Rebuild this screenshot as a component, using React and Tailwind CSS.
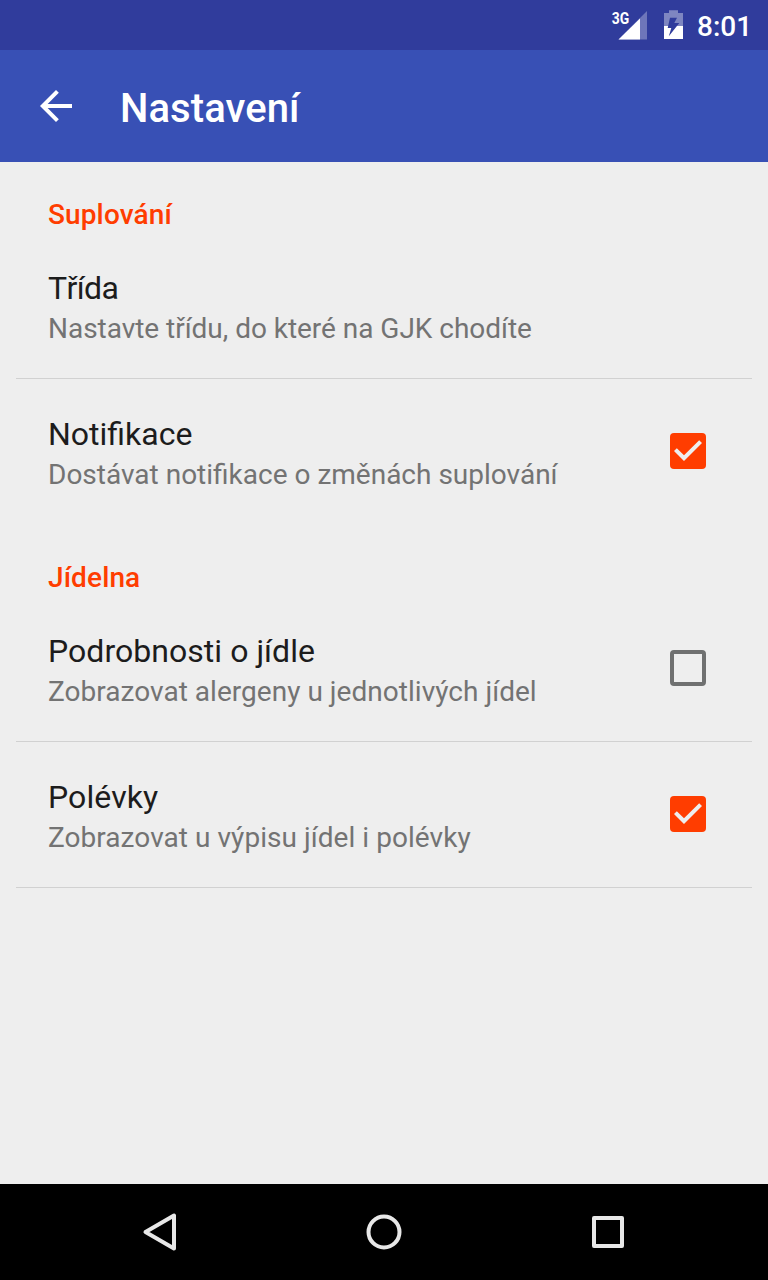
function CheckBox({ checked }) {
  return (
    <svg className="size-12 shrink-0" viewBox="0 0 48 48">
      {checked ? (
        <>
          <rect x="6" y="6" width="36" height="36" rx="4" fill="#ff3d00" />
          <path d="M20 34 10 24l2.830-2.830L20 28.340l15.170-15.170L38 16z" fill="#eeeeee" />
        </>
      ) : (
        <rect x="8" y="8" width="32" height="32" rx="2" fill="none" stroke="#6f7070" strokeWidth="4" />
      )}
    </svg>
  );
}

function Category({ children }) {
  return (
    <h2 className="flex h-[71px] items-start px-12 pt-[33px] text-[28px] leading-[40px] font-medium tracking-[0.12px] text-[#ff3d00]">
      {children}
    </h2>
  );
}

function Preference({ title, titleClass = "", summary, summaryClass = "", checked, divider }) {
  return (
    <div className="mx-4 flex h-[146px] flex-col">
      <div className="flex flex-1 items-start justify-between pr-10 pl-8">
        <div className="pt-[35px] whitespace-nowrap">
          <div className={`text-[32px] leading-[40px] text-[#1c1c1c] ${titleClass}`}>{title}</div>
          <div className={`text-[28px] leading-[42px] text-[#737373] ${summaryClass}`}>{summary}</div>
        </div>
        {checked !== undefined && (
          <div className="pt-12">
            <CheckBox checked={checked} />
          </div>
        )}
      </div>
      {divider && <div className="h-px bg-[#d1d1d1]" />}
    </div>
  );
}

function StatusBar() {
  return (
    <div className="flex h-[50px] justify-end bg-[#303c9c] text-white">
      <svg className="h-[50px] w-[90px]" viewBox="0 0 90 50">
        <path d="M47 11V39.5H18.5Z" fill="#fff" fillOpacity=".3" />
        <path d="M40 18.5V39.5H18.5Z" fill="#fff" />
        <text transform="translate(11.700 24) scale(.82 1)" fontFamily="Roboto" fontWeight="700" fontSize="17" fill="#fff">3G</text>
        <path d="M64 26V13H69V10.300H78V13H83V26Z" fill="#fff" fillOpacity=".38" />
        <path d="M64 26H83V39H64Z" fill="#fff" />
        <path d="M70 17.700H77L74.300 23H79.300L68.800 36.300L71.300 28H67.700Z" fill="#303c9c" />
      </svg>
      <span className="w-[78px] pl-[7px] text-[28px] leading-[54px] font-medium">8:01</span>
    </div>
  );
}

export default function App() {
  return (
    <div className="flex h-[1280px] w-[768px] flex-col bg-[#eeeeee] font-['Roboto',sans-serif]">
      <StatusBar />
      <header className="flex h-28 items-center bg-[#3850b5] text-white">
        <svg className="ml-8 size-12" viewBox="0 0 24 24" fill="currentColor">
          <path d="M20 11H7.830l5.590-5.590L12 4l-8 8 8 8 1.410-1.410L7.830 13H20z" />
        </svg>
        <h1 className="ml-10 pt-1.5 text-[40px] leading-[48px] font-medium tracking-[0.08px]">Nastavení</h1>
      </header>
      <main className="flex-1">
        <Category>Suplování</Category>
        <Preference
          title="Třída"
          titleClass="tracking-[-0.6px]"
          summary="Nastavte třídu, do které na GJK chodíte"
          summaryClass="tracking-[-0.03px]"
          divider
        />
        <Preference
          title="Notifikace"
          summary="Dostávat notifikace o změnách suplování"
          checked
        />
        <Category>Jídelna</Category>
        <Preference
          title="Podrobnosti o jídle"
          titleClass="tracking-[0.04px]"
          summary="Zobrazovat alergeny u jednotlivých jídel"
          summaryClass="tracking-[0.03px]"
          checked={false}
          divider
        />
        <Preference
          title="Polévky"
          titleClass="tracking-[0.1px]"
          summary="Zobrazovat u výpisu jídel i polévky"
          summaryClass="tracking-[0.05px]"
          checked
          divider
        />
      </main>
      <nav className="flex h-24 items-center justify-between bg-black px-32">
        <svg className="size-16" viewBox="0 0 64 64" fill="none" stroke="#e8e8e8" strokeWidth="4" strokeLinejoin="round">
          <path d="M46 15.500V48.500L17.500 32Z" />
        </svg>
        <svg className="size-16" viewBox="0 0 64 64" fill="none" stroke="#e8e8e8" strokeWidth="4">
          <circle cx="32" cy="32" r="15.500" />
        </svg>
        <svg className="size-16" viewBox="0 0 64 64" fill="none" stroke="#e8e8e8" strokeWidth="4" strokeLinejoin="round">
          <rect x="18" y="18" width="28" height="28" />
        </svg>
      </nav>
    </div>
  );
}
